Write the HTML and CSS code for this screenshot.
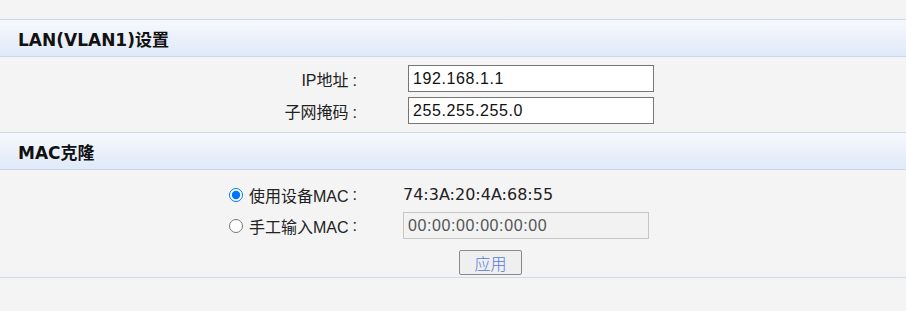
FILE: index.html
```html
<!DOCTYPE html>
<html lang="zh-CN">
<head>
<meta charset="utf-8">
<title>LAN设置</title>
<link rel="stylesheet" href="styles.css">
</head>
<body>
<div class="page">
  <div class="sec-head">LAN(VLAN1)设置</div>
  <div class="form lan">
    <label class="lbl" for="ip">IP地址<span class="colon">:</span></label>
    <input class="txt" id="ip" type="text" value="192.168.1.1">
    <label class="lbl" for="mask">子网掩码<span class="colon">:</span></label>
    <input class="txt" id="mask" type="text" value="255.255.255.0">
  </div>
  <div class="sec-head">MAC克隆</div>
  <div class="form mac">
    <label class="lbl radio-lbl"><input class="radio" type="radio" name="mac" checked>使用设备MAC<span class="colon">:</span></label>
    <div class="val">74:3A:20:4A:68:55</div>
    <label class="lbl radio-lbl"><input class="radio" type="radio" name="mac">手工输入MAC<span class="colon">:</span></label>
    <input class="txt" type="text" value="00:00:00:00:00:00" disabled>
  </div>
  <div class="btn-row"><button class="btn" type="button">应用</button></div>
  <div class="foot"></div>
</div>
</body>
</html>
```
FILE: styles.css
```css
html, body {
  margin: 0;
  padding: 0;
  background: #f4f4f4;
}
body {
  font-family: "Liberation Sans", "Noto Sans CJK SC", sans-serif;
  font-size: 16px;
  color: #222;
}
.page {
  padding-top: 19px;
}
.sec-head {
  height: 36px;
  display: flex;
  align-items: center;
  padding-left: 18px;
  border-top: 1px solid #cbd8ea;
  border-bottom: 1px solid #c7d7ee;
  background: linear-gradient(#f7f9fd, #dfe9f8);
  font-family: "DejaVu Sans", "Noto Sans CJK SC", sans-serif;
  font-weight: bold;
  font-size: 17px;
  color: #111;
}
.form {
  display: grid;
  align-items: center;
}
.lan {
  grid-template-columns: 357px 246px;
  column-gap: 51px;
  row-gap: 5px;
  grid-auto-rows: 27px;
  padding: 8px 0;
}
.mac {
  grid-template-columns: 357px 246px;
  column-gap: 46px;
  row-gap: 4px;
  grid-auto-rows: 27px;
  padding-top: 11px;
}
.lbl {
  text-align: right;
  color: #222;
  white-space: nowrap;
}
.colon {
  margin-left: 4px;
}
.radio-lbl {
  display: flex;
  align-items: center;
  justify-content: flex-end;
}
.radio {
  width: 14px;
  height: 14px;
  margin: 0 6px 0 0;
}
.txt {
  box-sizing: border-box;
  width: 246px;
  height: 27px;
  margin: 0;
  padding: 0 4px;
  border: 1px solid #767676;
  background: #fff;
  font-family: "Liberation Sans", "Noto Sans CJK SC", sans-serif;
  font-size: 16px;
  letter-spacing: 0.6px;
  color: #111;
}
.txt:disabled {
  border-color: #c6c6c6;
  background: #f2f2f2;
  color: #555;
}
.val {
  font-family: "DejaVu Sans", sans-serif;
  font-size: 16px;
  color: #222;
}
.btn-row {
  display: flex;
  padding: 11px 0 2px 459px;
}
.btn {
  box-sizing: border-box;
  width: 63px;
  height: 25px;
  margin: 0;
  padding: 0;
  border: 1px solid #8a8a8a;
  border-radius: 2px;
  background: #efefef;
  font-family: "Noto Sans CJK SC", sans-serif;
  font-size: 16px;
  font-weight: 300;
  color: #5577dd;
}
.foot {
  border-top: 1px solid #cfdbe8;
}
```
